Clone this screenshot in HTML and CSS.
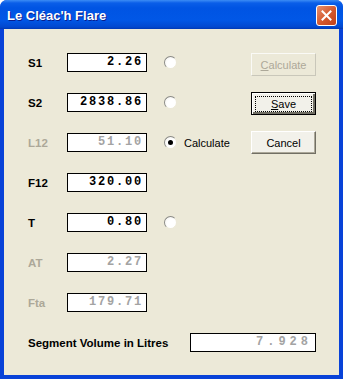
FILE: index.html
```html
<!DOCTYPE html>
<html lang="en">
<head>
    <meta charset="UTF-8">
    <title>Le Cléac'h Flare</title>
    <link rel="stylesheet" href="styles.css">
</head>
<body>
    <div class="window">
        <div class="titlebar">
            <span class="title">Le Cléac'h Flare</span>
            <button class="close-btn" aria-label="Close">
                <svg width="11" height="11" viewBox="0 0 11 11">
                    <path d="M1.5 1.5 L9.5 9.5 M9.5 1.5 L1.5 9.5" stroke="#fff" stroke-width="2" stroke-linecap="square"/>
                </svg>
            </button>
        </div>

        <div class="client">
            <div class="main">
                <div class="fields">
                    <div class="row">
                        <span class="lbl">S1</span>
                        <div class="box">2.26</div>
                        <span class="radio"></span>
                    </div>
                    <div class="row">
                        <span class="lbl">S2</span>
                        <div class="box">2838.86</div>
                        <span class="radio"></span>
                    </div>
                    <div class="row">
                        <span class="lbl disabled">L12</span>
                        <div class="box disabled">51.10</div>
                        <span class="radio checked"></span>
                        <span class="radio-text">Calculate</span>
                    </div>
                    <div class="row">
                        <span class="lbl">F12</span>
                        <div class="box">320.00</div>
                    </div>
                    <div class="row">
                        <span class="lbl">T</span>
                        <div class="box">0.80</div>
                        <span class="radio"></span>
                    </div>
                    <div class="row">
                        <span class="lbl disabled">AT</span>
                        <div class="box disabled">2.27</div>
                    </div>
                    <div class="row">
                        <span class="lbl disabled">Fta</span>
                        <div class="box disabled">179.71</div>
                    </div>
                </div>

                <div class="buttons">
                    <button class="btn" disabled><u>C</u>alculate</button>
                    <button class="btn default"><span class="focus"><u>S</u>ave</span></button>
                    <button class="btn">Cancel</button>
                </div>
            </div>

            <div class="row seg-row">
                <span class="lbl seg-lbl">Segment Volume in Litres</span>
                <div class="box disabled seg-box">7.928</div>
            </div>
        </div>
    </div>
</body>
</html>
```

FILE: styles.css
```css
body {
    margin: 0;
    font-family: "Liberation Sans", Arial, sans-serif;
    font-size: 11px;
}
.window {
    width: 343px;
    height: 379px;
    box-sizing: border-box;
    background-color: #0842d8;
    border-radius: 7px 7px 0 0;
    padding: 0 4px 4px 4px;
    display: flex;
    flex-direction: column;
}
.titlebar {
    height: 29px;
    margin: 0 -4px;
    padding: 0 6px 0 7px;
    display: flex;
    align-items: center;
    justify-content: space-between;
    border-radius: 7px 7px 0 0;
    background: linear-gradient(to bottom, #3c8cf5 0px, #0a5ee8 3px, #0054e3 8px, #0157e6 20px, #0248cf 27px, #0038b4 29px);
}
.title {
    color: white;
    font-weight: bold;
    font-size: 13px;
    text-shadow: 1px 1px 0 #0a1e8c;
    padding-top: 1px;
}
.close-btn {
    width: 21px;
    height: 21px;
    padding: 0;
    border: 1px solid #fff;
    border-radius: 3px;
    background: linear-gradient(to bottom right, #e6906f, #d4572c 55%, #c1401a);
    display: flex;
    align-items: center;
    justify-content: center;
    margin-top: 2px;
}
.client {
    flex: 1;
    background-color: #ece9d8;
    padding: 24px 23px 0 24px;
}
.main {
    display: flex;
}
.fields {
    flex: 1;
}
.row {
    display: flex;
    align-items: center;
    height: 19px;
    margin-bottom: 21px;
}
.lbl {
    width: 39px;
    font-weight: bold;
    font-size: 11.5px;
    color: #000;
}
.lbl.disabled {
    color: #aca899;
}
.box {
    width: 80px;
    height: 19px;
    box-sizing: border-box;
    border: 1px solid #000;
    background-color: white;
    font-family: "Liberation Mono", "Courier New", monospace;
    font-weight: bold;
    font-size: 12px;
    letter-spacing: 1.8px;
    text-align: right;
    padding-right: 3px;
    line-height: 17px;
}
.box.disabled {
    color: #a3a3a3;
}
.radio {
    width: 13px;
    height: 13px;
    box-sizing: border-box;
    margin-left: 17px;
    border-radius: 50%;
    border: 1px solid;
    border-color: #8a8a86 #ece9d8 #ece9d8 #8a8a86;
    background: radial-gradient(circle at 60% 60%, #fff 45%, #f1f0ea 100%);
    position: relative;
}
.radio.checked::after {
    content: "";
    position: absolute;
    left: 3px;
    top: 3px;
    width: 5px;
    height: 5px;
    border-radius: 50%;
    background-color: #000;
}
.radio-text {
    margin-left: 7px;
}
.buttons {
    display: flex;
    flex-direction: column;
    gap: 16px;
}
.btn {
    width: 65px;
    height: 23px;
    box-sizing: border-box;
    font-family: "Liberation Sans", Arial, sans-serif;
    font-size: 11px;
    color: #000;
    background-color: #f2f1ea;
    border: 1px solid;
    border-color: #fff #716f64 #716f64 #fff;
    box-shadow: inset -1px -1px 0 #aca899;
    padding: 0;
}
.btn:disabled {
    color: #aca899;
    background-color: #ece9d8;
    border-color: #fafaf6 #c9c7ba #c9c7ba #fafaf6;
    box-shadow: none;
}
.btn.default {
    border: 1px solid #000;
    box-shadow: inset 1px 1px 0 #fff, inset -2px -2px 0 #716f64;
}
.focus {
    display: block;
    margin: 2px 3px;
    border: 1px dotted #000;
    line-height: 14px;
}
.seg-row {
    margin-bottom: 0;
}
.seg-lbl {
    width: 162px;
}
.seg-box {
    width: 126px;
    letter-spacing: 4px;
}
```
